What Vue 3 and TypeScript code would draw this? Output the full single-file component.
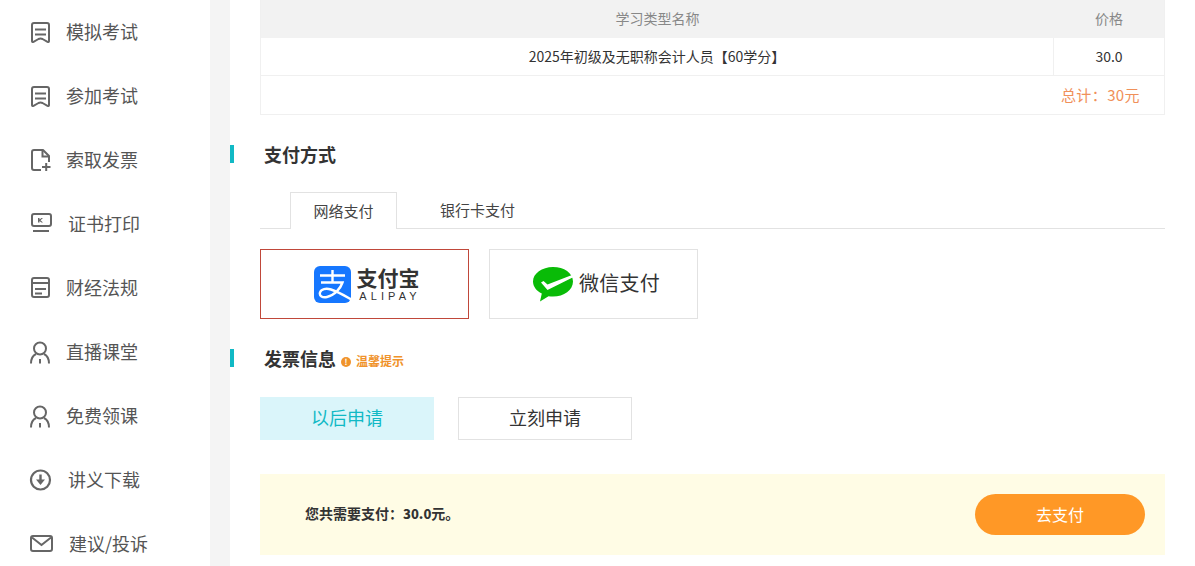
<template>
  <div class="page">
    <!-- Sidebar -->
    <aside class="sidebar">
      <div v-for="item in menu" :key="item.label" class="menu-item">
        <svg class="menu-icon" width="26" height="26" viewBox="0 0 26 26" fill="none" stroke="#666" stroke-width="2">
          <template v-if="item.icon === 'note'">
            <path d="M5 6q0-2 2-2h13q2 0 2 2v16q0 1.500-1.500 .8l-5-2.800q-2-1-4 0l-5 2.800q-1.500 .7-1.500-.8z" stroke-linejoin="round" />
            <path d="M8 10.500h11M8 15.500h11" />
          </template>
          <template v-else-if="item.icon === 'invoice'">
            <path d="M14 23H7q-2 0-2-2V5q0-2 2-2h9l6 6v6" stroke-linejoin="round" />
            <path d="M15.500 3.500v6h6.500M15 20h8.500M19.200 16v8" />
          </template>
          <template v-else-if="item.icon === 'print'">
            <rect x="5" y="3" width="19" height="12" rx="2" />
            <path d="M6 20h16" />
            <path d="M11 7v4.500h1.500v-1.500l2 1.500h1.500l-2.500-2.200 2.500-2.300h-1.500l-2 1.500v-1.500z" fill="#666" stroke="none" />
          </template>
          <template v-else-if="item.icon === 'doc'">
            <rect x="5" y="3" width="17" height="19" rx="2" />
            <path d="M5 8h17M8 14h11M8 18.500h7" />
          </template>
          <template v-else-if="item.icon === 'user'">
            <circle cx="13" cy="9.500" r="6" />
            <path d="M4 24.500q0-7 5-9.500M22 24.500q0-7-5-9.500M13 20v4.500" />
          </template>
          <template v-else-if="item.icon === 'download'">
            <circle cx="13.500" cy="13" r="9.500" stroke-width="2.200" />
            <path d="M13.500 7.500v6" stroke-width="2.400" />
            <path d="M9 12.500h9L13.500 18z" fill="#666" stroke="none" />
          </template>
          <template v-else>
            <rect x="4" y="5" width="21" height="15" rx="2" />
            <path d="M5 6.500l9.500 7.500 9.500-7.500" />
          </template>
        </svg>
        <span class="menu-label" :class="item.cls">{{ item.label }}</span>
      </div>
    </aside>

    <div class="gutter"></div>

    <!-- Main content -->
    <main class="content">
      <div class="order-table">
        <div class="row head">
          <div class="cell name">学习类型名称</div>
          <div class="cell price">价格</div>
        </div>
        <div class="row body">
          <div class="cell name">2025年初级及无职称会计人员【60学分】</div>
          <div class="cell price">30.0</div>
        </div>
        <div class="total">总计：30元</div>
      </div>

      <section class="section-title pay-title">
        <span class="mark"></span>
        <h2>支付方式</h2>
      </section>

      <div class="tabs">
        <div class="tab active">网络支付</div>
        <div class="tab">银行卡支付</div>
      </div>

      <div class="pay-options">
        <div class="pay-box selected">
          <svg class="logo" width="37" height="37" viewBox="0 0 37 37">
            <rect width="37" height="37" rx="6" fill="#1677ff" />
            <path d="M6 9.500h25M18.500 4v12.500M7 16.500h21.500c-2 6-8 13-15.500 14.500-4.500 1-8-1-7-4.500 1-3.500 6-4.500 11-3 7 2 15 7 24 12" fill="none" stroke="#fff" stroke-width="2.400" />
          </svg>
          <div class="alipay-text">
            <span class="alipay-cn">支付宝</span>
            <span class="alipay-en">ALIPAY</span>
          </div>
        </div>
        <div class="pay-box wechat">
          <svg class="logo" width="40" height="35" viewBox="0 0 40 35">
            <path d="M20 0C9 0 0 6.500 0 14.500c0 5 3.500 9.500 8.800 12L7 34.500l8.500-5.300c1.500.3 3 .4 4.500.4 11 0 20-6.700 20-15.100S31 0 20 0z" fill="#09bb07" />
            <path d="M8 15.500l2.500-1.500 4 3.500L39 8l.6 2.500L14.500 23z" fill="#fff" />
          </svg>
          <span class="wechat-text">微信支付</span>
        </div>
      </div>

      <section class="section-title invoice-title">
        <span class="mark"></span>
        <h2>发票信息</h2>
        <span class="tip-dot">!</span>
        <span class="tip-text">温馨提示</span>
      </section>

      <div class="invoice-options">
        <div class="invoice-btn on">以后申请</div>
        <div class="invoice-btn">立刻申请</div>
      </div>

      <div class="pay-bar">
        <span class="pay-sum">您共需要支付：<b>30.0</b>元。</span>
        <button class="pay-btn">去支付</button>
      </div>
    </main>
  </div>
</template>

<script setup lang="ts">
interface MenuItem {
  label: string;
  icon: string;
  cls?: string;
}

const menu: MenuItem[] = [
  { label: '模拟考试', icon: 'note' },
  { label: '参加考试', icon: 'note' },
  { label: '索取发票', icon: 'invoice' },
  { label: '证书打印', icon: 'print', cls: 'shift' },
  { label: '财经法规', icon: 'doc' },
  { label: '直播课堂', icon: 'user' },
  { label: '免费领课', icon: 'user' },
  { label: '讲义下载', icon: 'download', cls: 'shift' },
  { label: '建议/投诉', icon: 'mail', cls: 'shift-more' },
];
</script>

<style>
html,
body {
  margin: 0;
  overflow: hidden;
  background: #fff;
}
</style>

<style scoped>
.page {
  display: flex;
  width: 1195px;
  height: 566px;
  overflow: hidden;
  font-family: "Noto Sans CJK SC", "Liberation Sans", sans-serif;
  color: #333;
}

.sidebar {
  width: 210px;
  flex-shrink: 0;
  padding-left: 27px;
  box-sizing: border-box;
}

.menu-item {
  display: flex;
  align-items: center;
  height: 64px;
}

.menu-icon {
  flex-shrink: 0;
}

.menu-label {
  margin-left: 13px;
  padding-bottom: 2px;
  font-size: 18px;
  line-height: 62px;
  color: #555;
}

.menu-label.shift {
  margin-left: 15px;
}

.menu-label.shift-more {
  margin-left: 16px;
}

.gutter {
  width: 20px;
  flex-shrink: 0;
  background: #f4f4f4;
}

.content {
  width: 905px;
  margin-left: 30px;
  flex-shrink: 0;
}

.order-table {
  border: 1px solid #f0f0f0;
  border-top: 0;
  font-size: 14px;
}

.row {
  display: flex;
  text-align: center;
}

.row.head {
  height: 38px;
  line-height: 37px;
  background: #f2f2f2;
  color: #888;
}

.row.body {
  height: 37px;
  line-height: 37px;
  border-bottom: 1px solid #f0f0f0;
  color: #333;
}

.cell.name {
  flex: 1;
}

.cell.price {
  width: 110px;
  flex-shrink: 0;
}

.row.body .cell.price {
  border-left: 1px solid #f0f0f0;
}

.total {
  height: 38px;
  line-height: 38px;
  padding-right: 24px;
  text-align: right;
  font-size: 15px;
  letter-spacing: 0.4px;
  color: #f0905a;
}

.section-title {
  position: relative;
  display: flex;
  align-items: center;
}

.mark {
  position: absolute;
  left: -30px;
  top: 50%;
  width: 4px;
  height: 18px;
  margin-top: -9px;
  background: #11b9c5;
}

.section-title h2 {
  margin: 0 0 0 4px;
  font-size: 18px;
  font-weight: 700;
  color: #333;
}

.pay-title {
  height: 24px;
  margin-top: 27px;
}

.tabs {
  display: flex;
  height: 36px;
  margin-top: 26px;
  padding-left: 30px;
  border-bottom: 1px solid #e2e2e2;
  font-size: 15px;
}

.tab {
  height: 36px;
  line-height: 36px;
  padding: 0 43px;
  color: #444;
  box-sizing: border-box;
}

.tab.active {
  width: 107px;
  height: 37px;
  padding: 0;
  text-align: center;
  border: 1px solid #e2e2e2;
  border-bottom: 0;
  background: #fff;
}

.pay-options {
  display: flex;
  gap: 20px;
  margin-top: 20px;
}

.pay-box {
  display: flex;
  align-items: center;
  justify-content: center;
  gap: 6px;
  width: 209px;
  height: 70px;
  padding-left: 6px;
  border: 1px solid #e2e2e2;
  box-sizing: border-box;
}

.pay-box.selected {
  border-color: #c0483a;
  padding-left: 4px;
}

.logo {
  flex-shrink: 0;
}

.alipay-text {
  display: flex;
  flex-direction: column;
  align-items: center;
  color: #333;
}

.alipay-cn {
  font-size: 21px;
  line-height: 21px;
  font-weight: 700;
}

.alipay-en {
  margin-top: 3px;
  margin-right: -4.100px;
  font-size: 11px;
  line-height: 11px;
  letter-spacing: 4.100px;
  font-family: "Liberation Sans", sans-serif;
}

.wechat-text {
  padding-bottom: 3px;
  font-size: 20px;
  letter-spacing: 0.3px;
  color: #333;
}

.invoice-title {
  height: 24px;
  margin-top: 27px;
}

.invoice-title h2 {
  margin-right: 4px;
}

.tip-dot {
  width: 10px;
  height: 10px;
  margin-top: 8px;
  margin-left: 1px;
  border-radius: 50%;
  background: #f0932b;
  color: #fff;
  font-size: 8px;
  line-height: 10px;
  font-weight: 700;
  text-align: center;
}

.tip-text {
  margin-top: 4px;
  margin-left: 5px;
  font-size: 12px;
  font-weight: 700;
  color: #f0932b;
}

.invoice-options {
  display: flex;
  gap: 24px;
  margin-top: 27px;
}

.invoice-btn {
  width: 174px;
  height: 43px;
  line-height: 39px;
  text-align: center;
  font-size: 18px;
  color: #333;
  border: 1px solid #e2e2e2;
  box-sizing: border-box;
}

.invoice-btn.on {
  color: #11b9c5;
  background: #daf5fa;
  border-color: #daf5fa;
}

.pay-bar {
  display: flex;
  align-items: center;
  justify-content: space-between;
  height: 81px;
  margin-top: 34px;
  padding: 0 20px 0 45px;
  background: #fffce5;
}

.pay-sum {
  padding-bottom: 3px;
  font-size: 14px;
  font-weight: 700;
  color: #333;
}

.pay-sum b {
  font-size: 13px;
}

.pay-btn {
  width: 170px;
  height: 41px;
  padding: 0 0 2px;
  border: 0;
  border-radius: 21px;
  background: #ff9826;
  color: #fff;
  font-size: 16px;
  font-family: inherit;
}
</style>
